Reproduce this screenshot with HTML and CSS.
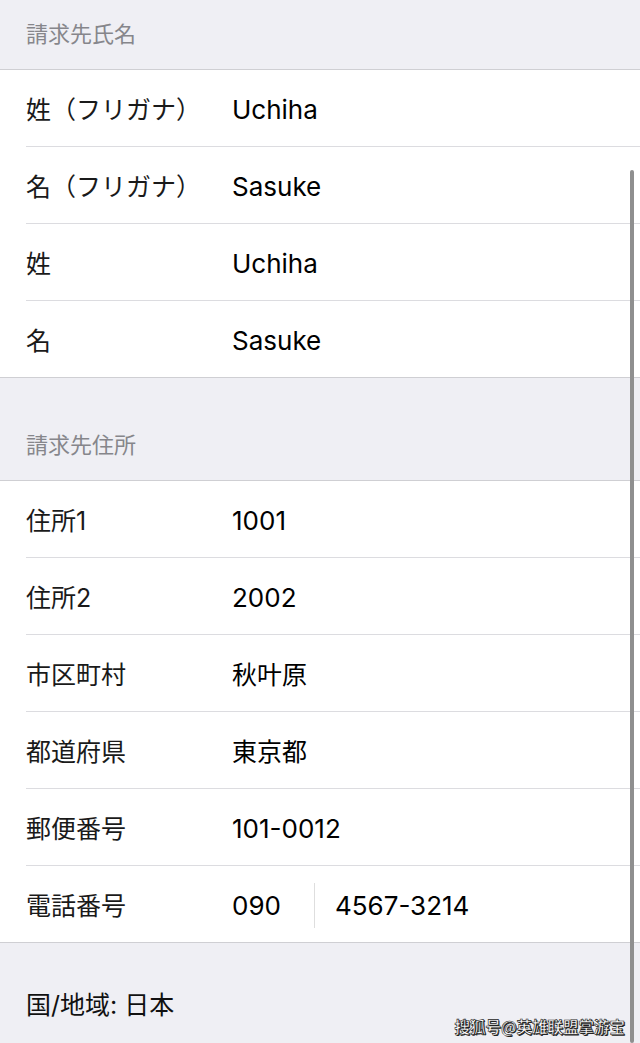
FILE: index.html
```html
<!DOCTYPE html>
<html lang="ja">
<head>
<meta charset="UTF-8">
<meta name="viewport" content="width=device-width, initial-scale=1.0">
<link rel="stylesheet" href="styles.css">
<title>請求先</title>
</head>
<body>
<div class="page">
<div class="sec-head first">請求先氏名</div>
<div class="group">
<div class="row"><span class="label">姓（フリガナ）</span><span class="value">Uchiha</span></div>
<div class="row"><span class="label">名（フリガナ）</span><span class="value">Sasuke</span></div>
<div class="row"><span class="label">姓</span><span class="value">Uchiha</span></div>
<div class="row"><span class="label">名</span><span class="value">Sasuke</span></div>
</div>
<div class="sec-head">請求先住所</div>
<div class="group">
<div class="row"><span class="label">住所1</span><span class="value">1001</span></div>
<div class="row"><span class="label">住所2</span><span class="value">2002</span></div>
<div class="row"><span class="label">市区町村</span><span class="value jp">秋叶原</span></div>
<div class="row"><span class="label">都道府県</span><span class="value jp">東京都</span></div>
<div class="row"><span class="label">郵便番号</span><span class="value">101-0012</span></div>
<div class="row"><span class="label">電話番号</span><span class="value phone"><span class="area">090</span><span class="num">4567-3214</span></span></div>
</div>
<div class="country">国/地域: 日本</div>
<div class="scrollbar"></div>
<div class="mark">搜狐号@英雄联盟掌游宝</div>
</div>
</body>
</html>
```

FILE: styles.css
```css
html,
body {
height: 100%;
margin: 0;
overflow: hidden;
}
body {
background: #efeff4;
font-family: "Inter", "Noto Sans CJK JP", sans-serif;
color: #111;
}
.page {
position: relative;
height: 100%;
}
.sec-head {
display: flex;
align-items: flex-end;
height: 103px;
padding: 0 0 21px 26px;
box-sizing: border-box;
font-size: 22px;
color: #86868b;
border-bottom: 1px solid #cfcfd3;
}
.sec-head.first {
height: 70px;
}
.group {
background: #fff;
border-bottom: 1px solid #cfcfd3;
}
.row {
display: flex;
align-items: center;
height: 76px;
margin-left: 26px;
border-bottom: 1px solid #dcdce0;
}
.row:last-child {
border-bottom: none;
}
.label {
width: 206px;
font-size: 25px;
color: #1a1a1a;
}
.value {
font-size: 26px;
color: #000;
padding-top: 2px;
}
.value.jp {
font-size: 25px;
padding-top: 0;
}
.phone {
display: flex;
align-items: center;
}
.area {
width: 82px;
}
.num {
border-left: 1px solid #dedede;
padding-left: 20px;
line-height: 45px;
}
.country {
padding: 42px 0 0 26px;
font-size: 25px;
color: #111;
}
.scrollbar {
position: absolute;
left: 630px;
top: 170px;
width: 4px;
bottom: 0;
border-radius: 2px;
background: #8f8f8f;
}
.mark {
position: absolute;
right: 15px;
bottom: 6px;
font-family: "Noto Sans CJK SC", sans-serif;
font-size: 15.5px;
font-weight: bold;
color: #fff;
-webkit-text-stroke: 0.6px #222;
text-shadow: 1px 1px 0 #222;
}
```
